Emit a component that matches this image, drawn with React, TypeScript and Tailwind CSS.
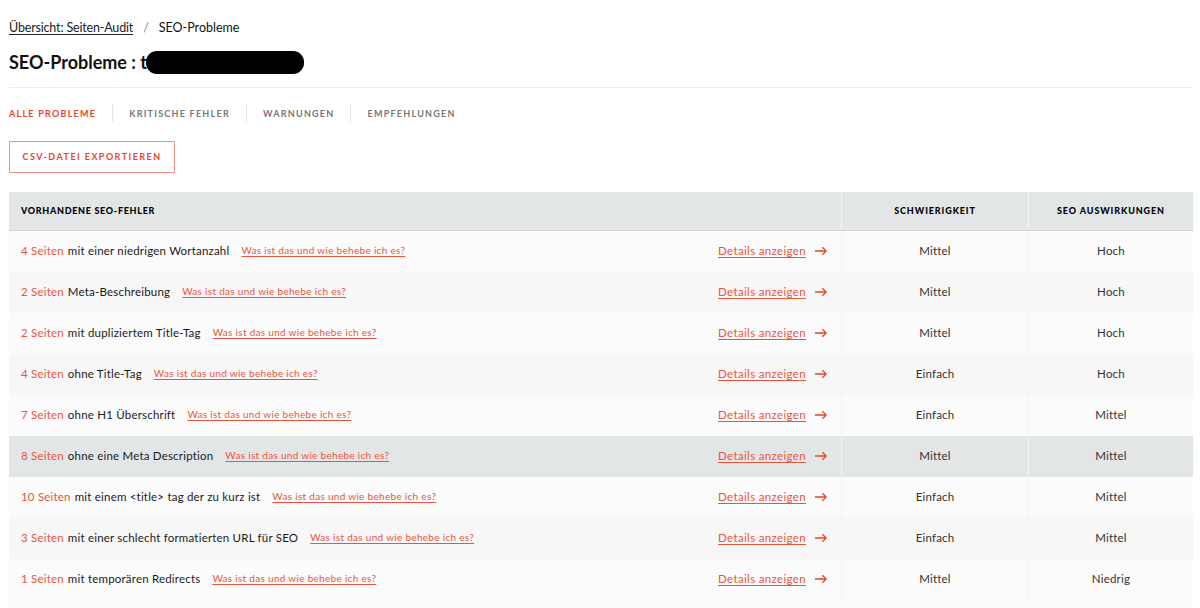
const rows = [
  { count: "4 Seiten", text: "mit einer niedrigen Wortanzahl", level: "Mittel", impact: "Hoch" },
  { count: "2 Seiten", text: "Meta-Beschreibung", level: "Mittel", impact: "Hoch" },
  { count: "2 Seiten", text: "mit dupliziertem Title-Tag", level: "Mittel", impact: "Hoch" },
  { count: "4 Seiten", text: "ohne Title-Tag", level: "Einfach", impact: "Hoch" },
  { count: "7 Seiten", text: "ohne H1 Überschrift", level: "Einfach", impact: "Mittel" },
  { count: "8 Seiten", text: "ohne eine Meta Description", level: "Mittel", impact: "Mittel" },
  { count: "10 Seiten", text: "mit einem <title> tag der zu kurz ist", level: "Einfach", impact: "Mittel" },
  { count: "3 Seiten", text: "mit einer schlecht formatierten URL für SEO", level: "Einfach", impact: "Mittel" },
  { count: "1 Seiten", text: "mit temporären Redirects", level: "Mittel", impact: "Niedrig" },
];

function rowColor(i: number) {
  if (i === 5) return "bg-[#e3e6e7]";
  return i % 2 === 0 ? "bg-[#fbfbfb]" : "bg-[#f7f7f7]";
}

function Arrow() {
  return (
    <svg width="12" height="10" viewBox="0 0 12 10" fill="none" stroke="#e8452c" strokeWidth="1.3" className="ml-[9px]">
      <path d="M0 5H11.2M7.4 1.2L11.2 5 7.4 8.8" />
    </svg>
  );
}

const tabs = ["KRITISCHE FEHLER", "WARNUNGEN", "EMPFEHLUNGEN"];

export default function App() {
  return (
    <div className="h-[608px] overflow-hidden bg-white pl-[9px] pr-[7px] font-['Lato',sans-serif] text-[#111]">
      <div className="flex h-[48px] items-center pt-[8px] text-[12.5px]">
        <a className="tracking-[-0.17px] text-[#222] underline underline-offset-2">Übersicht: Seiten-Audit</a>
        <span className="mx-[10px] text-[#888]">/</span>
        <span>SEO-Probleme</span>
      </div>
      <div className="flex h-[40px] items-start border-b border-[#ececec] pt-[3px] text-[18px] font-bold">
        <span className="flex h-[23px] items-center">
          SEO-Probleme : t
          <span className="-ml-[1px] inline-block h-[23px] w-[158px] rounded-[11px] bg-black" />
        </span>
      </div>
      <div className="mt-[17px] flex items-center text-[9px] font-bold tracking-[1.25px]">
        <span className="text-[#e8452c]">ALLE PROBLEME</span>
        {tabs.map((t) => (
          <span key={t} className="ml-[16px] flex h-[17px] items-center border-l border-[#e6e6e6] pl-[16px] text-[#777]">
            {t}
          </span>
        ))}
      </div>
      <button className="mt-[19px] flex h-[32px] w-[166px] items-center justify-center rounded-[1px] border border-[#ee8d80] text-[9px] font-bold tracking-[1.45px] text-[#e8452c]">
        CSV-DATEI EXPORTIEREN
      </button>
      <div className="mt-[19px] flex h-[39px] border-b border-[#d3d6d8] bg-[#e3e6e7] text-[9px] font-black tracking-[0.9px] text-black">
        <div className="flex w-[832px] items-center pl-[12px] tracking-[0.7px]">VORHANDENE SEO-FEHLER</div>
        <div className="flex w-[187px] items-center justify-center border-l border-[#f3f4f4]">SCHWIERIGKEIT</div>
        <div className="flex flex-1 items-center justify-center border-l border-[#f3f4f4]">SEO AUSWIRKUNGEN</div>
      </div>
      {rows.map((r, i) => (
        <div key={i} className={`flex h-[41px] text-[11.5px] tracking-[0.2px] ${rowColor(i)}`}>
          <div className="flex w-[832px] items-center pb-[2px] pl-[12px]">
            <span className="text-[#e8553f]">{r.count}</span>
            <span className="ml-[4px] text-[#1a1a1a]">{r.text}</span>
            <a className="ml-[12px] text-[10px] tracking-[0.3px] text-[#e8553f] underline underline-offset-2">Was ist das und wie behebe ich es?</a>
            <div className="ml-auto mr-[14px] flex items-center">
              <a className="tracking-[0.35px] text-[#e8553f] underline underline-offset-2">Details anzeigen</a>
              <Arrow />
            </div>
          </div>
          <div className="flex w-[187px] items-center justify-center border-l border-[#f3f4f4] pb-[2px] text-[#333]">{r.level}</div>
          <div className="flex flex-1 items-center justify-center border-l border-[#f3f4f4] pb-[2px] text-[#333]">{r.impact}</div>
        </div>
      ))}
      <div className="h-[8px] bg-[#fbfbfb]" />
    </div>
  );
}
